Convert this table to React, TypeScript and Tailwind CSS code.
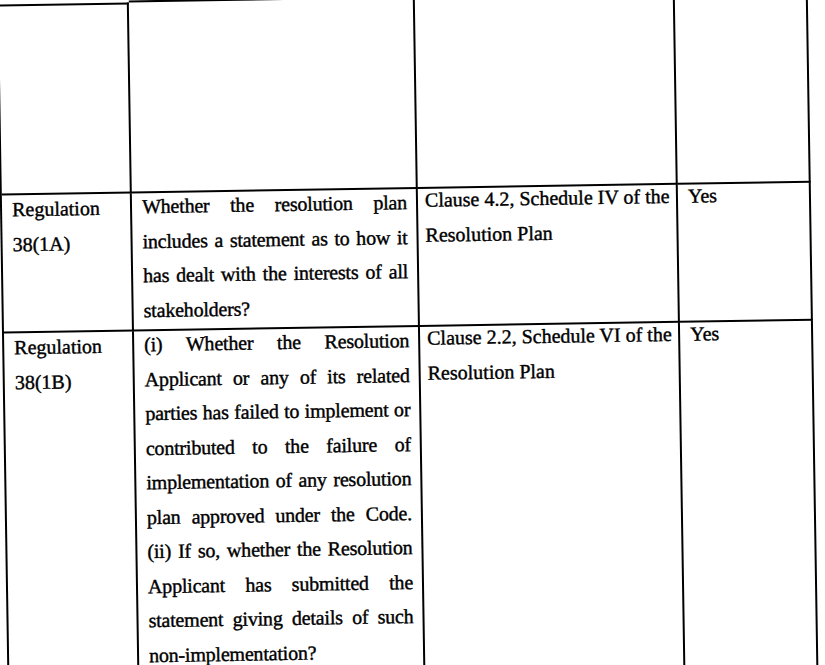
import React from 'react';

type Row = {
    reg: string[];
    question: string[];
    reference: string[];
    answer: string;
};

const rows: Row[] = [
    {
        reg: ['Regulation', '38(1A)'],
        question: [
            'Whether the resolution plan',
            'includes a statement as to how it',
            'has dealt with the interests of all',
            'stakeholders?',
        ],
        reference: ['Clause 4.2, Schedule IV of the', 'Resolution Plan'],
        answer: 'Yes',
    },
    {
        reg: ['Regulation', '38(1B)'],
        question: [
            '(i) Whether the Resolution',
            'Applicant or any of its related',
            'parties has failed to implement or',
            'contributed to the failure of',
            'implementation of any resolution',
            'plan approved under the Code.',
            '(ii) If so, whether the Resolution',
            'Applicant has submitted the',
            'statement giving details of such',
            'non-implementation?',
        ],
        reference: ['Clause 2.2, Schedule VI of the', 'Resolution Plan'],
        answer: 'Yes',
    },
];

// lines of a justified paragraph, each stretched except the last
const Justified = ({ lines }: { lines: string[] }) => (
    <div>
        {lines.map((line, i) => (
            <div
                key={i}
                className={
                    i < lines.length - 1
                        ? 'whitespace-nowrap text-justify [text-align-last:justify]'
                        : 'whitespace-nowrap text-left'
                }
            >
                {line}
            </div>
        ))}
    </div>
);

const cell = 'border-r-2 border-b-2 border-black';

export default function App() {
    return (
        <div className="h-[665px] w-[825px] overflow-hidden bg-white">
            <div
                className="-mt-[2px] ml-[2px] w-[811px] origin-[412px_332px] -rotate-[0.9deg] border-l-2 border-black text-[20px] leading-[34.5px] text-black [-webkit-text-stroke:0.4px_black]"
                style={{ fontFamily: '"Liberation Serif", "Times New Roman", serif' }}
            >
                {/* leftover row from the previous page */}
                <div className="grid h-[191px] grid-cols-[130px_286px_260px_133px]">
                    <div className={`${cell} border-t-2`}></div>
                    <div className={cell}>
                        <div className="-mt-[2px] h-[2px] w-[180px] bg-black"></div>
                    </div>
                    <div className={cell}></div>
                    <div className={cell}></div>
                </div>

                {rows.map((row, i) => (
                    <div
                        key={i}
                        className={`grid grid-cols-[130px_286px_260px_133px] ${i === 0 ? 'h-[138px]' : 'h-[420px]'}`}
                    >
                        <div className={`${cell} pl-[10px]`}>
                            <div className="-mt-[3px]">
                                {row.reg.map((r) => (
                                    <div key={r}>{r}</div>
                                ))}
                            </div>
                        </div>
                        <div className={`${cell} pl-[10px] pr-[9px] tracking-[-0.2px]`}>
                            <div className="-mt-[4px]">
                                <Justified lines={row.question} />
                            </div>
                        </div>
                        <div className={`${cell} pl-[7px] whitespace-nowrap`}>
                            <div className="-mt-[6px]">
                                {row.reference.map((r) => (
                                    <div key={r}>{r}</div>
                                ))}
                            </div>
                        </div>
                        <div className={`${cell} pl-[10px]`}>
                            <div className="-mt-[6px]">{row.answer}</div>
                        </div>
                    </div>
                ))}
            </div>
        </div>
    );
}
